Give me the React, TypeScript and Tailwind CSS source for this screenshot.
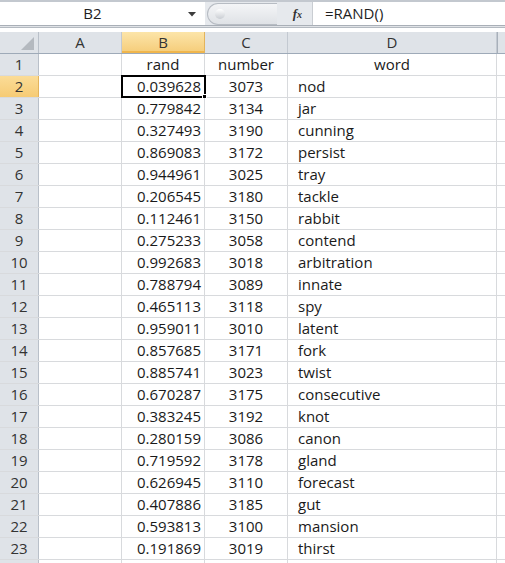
import React from 'react';

const rows: [string, string, string][] = [
  ['0.039628', '3073', 'nod'],
  ['0.779842', '3134', 'jar'],
  ['0.327493', '3190', 'cunning'],
  ['0.869083', '3172', 'persist'],
  ['0.944961', '3025', 'tray'],
  ['0.206545', '3180', 'tackle'],
  ['0.112461', '3150', 'rabbit'],
  ['0.275233', '3058', 'contend'],
  ['0.992683', '3018', 'arbitration'],
  ['0.788794', '3089', 'innate'],
  ['0.465113', '3118', 'spy'],
  ['0.959011', '3010', 'latent'],
  ['0.857685', '3171', 'fork'],
  ['0.885741', '3023', 'twist'],
  ['0.670287', '3175', 'consecutive'],
  ['0.383245', '3192', 'knot'],
  ['0.280159', '3086', 'canon'],
  ['0.719592', '3178', 'gland'],
  ['0.626945', '3110', 'forecast'],
  ['0.407886', '3185', 'gut'],
  ['0.593813', '3100', 'mansion'],
  ['0.191869', '3019', 'thirst'],
];

const font = { fontFamily: '"Open Sans", "Noto Sans", sans-serif' };

const FormulaBar = () => (
  <div className="h-[32px] border-t-2 border-[#c3c8cf] bg-white">
    <div className="flex h-[24px] border-b border-[#a9afb7]">
      <div className="relative flex w-[205px] items-center justify-center bg-white text-[15px] text-[#1e1e1e]">
        <span className="-ml-[20px]">B2</span>
        <svg className="absolute right-[9px] top-[10px]" width="8" height="5" viewBox="0 0 8 5">
          <path d="M0 0h8L4 4.5z" fill="#3c3c3c" />
        </svg>
      </div>
      <div className="flex w-[107px] items-center bg-[#e6e9ed]">
        <div className="ml-[2px] flex h-[22px] w-[70px] items-center rounded-l-full border border-r-0 border-[#b7bcc3] bg-gradient-to-b from-[#f4f5f7] to-[#dfe2e6] pl-[7px]">
          <div className="h-[10px] w-[10px] rounded-full bg-gradient-to-b from-[#ffffff] to-[#c9cdd3]" />
        </div>
        <span
          className="ml-auto mr-[10px] text-[13px] font-bold italic text-[#333]"
          style={{ fontFamily: '"Liberation Serif", serif' }}
        >
          f<span className="text-[10px]">x</span>
        </span>
      </div>
      <div className="flex flex-1 items-center border-l border-[#c9cdd2] bg-white pl-[12px] text-[15px] text-[#1e1e1e]">
        =RAND()
      </div>
    </div>
    <div className="h-[2px] border-b border-[#b4bac1] bg-[#dfe2e6]" />
  </div>
);

const colHeaders = [
  { label: 'A', w: 'w-[83px]' },
  { label: 'B', w: 'w-[83px]', active: true },
  { label: 'C', w: 'w-[83px]' },
  { label: 'D', w: 'w-[209px]' },
];

const HeaderRow = () => (
  <div className="flex h-[22px] border-b border-[#9eaab8] bg-[#dfe3e8] text-[15px] text-[#333]">
    <div className="relative w-[39px] border-r border-[#b9c0c9]">
      <svg className="absolute bottom-[3px] right-[4px]" width="13" height="13" viewBox="0 0 13 13">
        <path d="M13 0V13H0z" fill="#b4b9bf" />
      </svg>
    </div>
    {colHeaders.map((c) => (
      <div
        key={c.label}
        className={`${c.w} flex items-center justify-center border-r ${
          c.active
            ? 'border-[#e3b45c] bg-gradient-to-b from-[#fce5a9] to-[#f5cc78] shadow-[inset_0_-2px_0_#f0b64c]'
            : 'border-[#c3c9d1]'
        }`}
      >
        {c.label}
      </div>
    ))}
    <div className="flex-1 border-l border-[#a8b0ba]" />
  </div>
);

const Row = ({ n, b, c, d, header, selected }: { n?: number; b: string; c: string; d: string; header?: boolean; selected?: boolean }) => (
  <div className="flex h-[22px] border-b border-[#d8dadd] text-[15px] text-[#1a1a1a]">
    <div
      className={`flex w-[39px] items-center justify-center border-r text-[#333] ${
        selected
          ? 'border-[#e3b45c] bg-gradient-to-b from-[#fbdc97] to-[#f6cb74]'
          : 'border-[#b9c0c9] bg-[#dfe3e8]'
      }`}
    >
      {n}
    </div>
    <div className="w-[83px] border-r border-[#d8dadd]" />
    <div
      className={`relative flex w-[83px] items-center border-r border-[#d8dadd] ${
        header ? 'justify-center' : 'justify-end pr-[3px]'
      }`}
    >
      {b}
      {selected && (
        <div className="absolute -left-[1px] -top-[1px] h-[23px] w-[85px] border-2 border-black">
          <div className="absolute -bottom-[3px] -right-[3px] h-[5px] w-[5px] border border-white bg-black" />
        </div>
      )}
    </div>
    <div className="flex w-[83px] items-center justify-center border-r border-[#d8dadd]">{c}</div>
    <div
      className={`flex w-[209px] items-center border-r border-[#d8dadd] ${
        header ? 'justify-center' : 'pl-[10px]'
      }`}
    >
      {d}
    </div>
    <div className="flex-1" />
  </div>
);

export default function App() {
  return (
    <div className="h-[563px] w-[505px] overflow-hidden bg-white leading-none" style={font}>
      <FormulaBar />
      <HeaderRow />
      <Row n={1} b="rand" c="number" d="word" header />
      {rows.map((r, i) => (
        <Row key={i} n={i + 2} b={r[0]} c={r[1]} d={r[2]} selected={i === 0} />
      ))}
      <Row b="" c="" d="" />
    </div>
  );
}
